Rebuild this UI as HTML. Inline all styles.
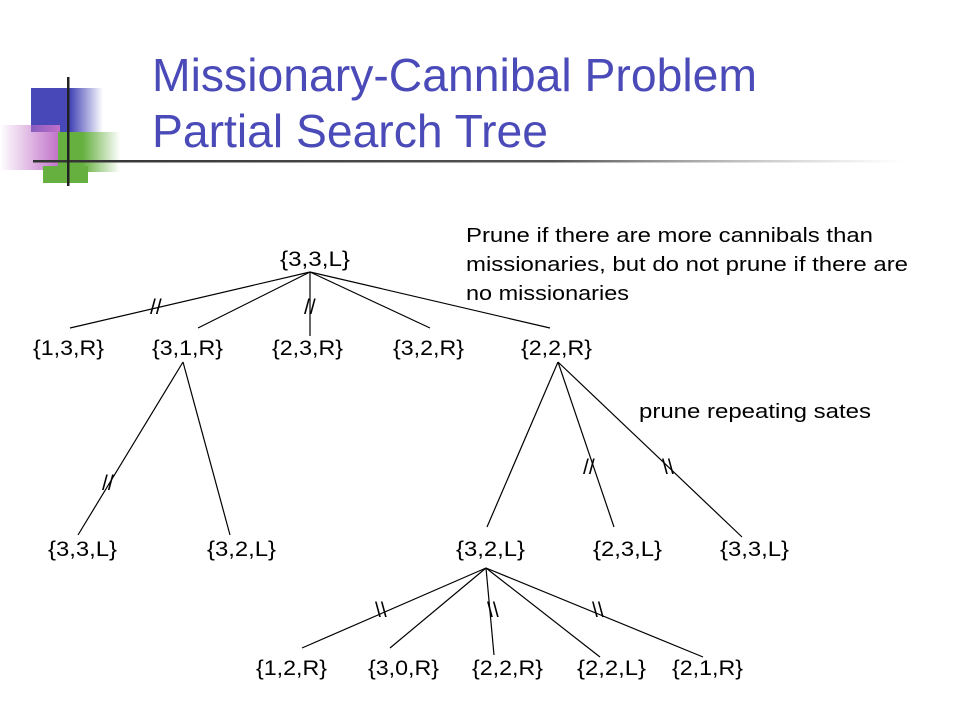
<!DOCTYPE html>
<html><head><meta charset="utf-8"><style>
html,body{margin:0;padding:0;background:#fff;}
svg{display:block}
text{font-family:"Liberation Sans",Arial,sans-serif;}
</style></head><body>
<svg width="960" height="720" viewBox="0 0 960 720" xmlns="http://www.w3.org/2000/svg">
<defs>
<linearGradient id="gb" x1="0" x2="1"><stop offset="0.55" stop-color="#4848b8"/><stop offset="1" stop-color="#4848b8" stop-opacity="0"/></linearGradient>
<linearGradient id="gp" x1="0" x2="1"><stop offset="0" stop-color="#c070c8" stop-opacity="0"/><stop offset="1" stop-color="#c070c8"/></linearGradient>
<linearGradient id="gg" x1="0" x2="1"><stop offset="0.4" stop-color="#66b040"/><stop offset="1" stop-color="#66b040" stop-opacity="0"/></linearGradient>
<linearGradient id="gl" x1="0" x2="1"><stop offset="0" stop-color="#333"/><stop offset="0.6" stop-color="#555"/><stop offset="1" stop-color="#999" stop-opacity="0"/></linearGradient>
</defs>
<rect x="31" y="88" width="72" height="44" fill="url(#gb)"/>
<rect x="0" y="125" width="60" height="45" fill="url(#gp)"/>
<rect x="58" y="132" width="62" height="40" fill="url(#gg)"/>
<rect x="43" y="166" width="45" height="17" fill="#66b040"/>
<rect x="33" y="160" width="870" height="2.5" fill="url(#gl)"/>
<rect x="67" y="77" width="2.5" height="109" fill="#222"/>
<text x="152" y="91" font-size="46" fill="#4a4ab8" textLength="605" lengthAdjust="spacingAndGlyphs">Missionary-Cannibal Problem</text>
<text x="152" y="147" font-size="46" fill="#4a4ab8" textLength="396" lengthAdjust="spacingAndGlyphs">Partial Search Tree</text>

<g font-size="20" fill="#000">
<text x="466" y="242" textLength="407" lengthAdjust="spacingAndGlyphs">Prune if there are more cannibals than</text>
<text x="466" y="271" textLength="442" lengthAdjust="spacingAndGlyphs">missionaries, but do not prune if there are</text>
<text x="466" y="300" textLength="163" lengthAdjust="spacingAndGlyphs">no missionaries</text>
<text x="639" y="418" textLength="232" lengthAdjust="spacingAndGlyphs">prune repeating sates</text>
</g>

<g stroke="#000" stroke-width="1.2" fill="none">
<line x1="310" y1="272" x2="70" y2="328"/>
<line x1="310" y1="272" x2="198" y2="328"/>
<line x1="310" y1="272" x2="310" y2="336"/>
<line x1="310" y1="272" x2="430" y2="328"/>
<line x1="310" y1="272" x2="550" y2="328"/>
<line x1="183" y1="362" x2="78" y2="535"/>
<line x1="183" y1="362" x2="230" y2="535"/>
<line x1="558" y1="362" x2="487" y2="527"/>
<line x1="558" y1="362" x2="614" y2="527"/>
<line x1="558" y1="362" x2="742" y2="537"/>
<line x1="486" y1="568" x2="302" y2="648"/>
<line x1="486" y1="568" x2="390" y2="648"/>
<line x1="486" y1="568" x2="494" y2="655"/>
<line x1="486" y1="568" x2="600" y2="657"/>
<line x1="486" y1="568" x2="703" y2="657"/>
</g>

<g font-size="21" fill="#000">
<text x="150" y="314">//</text>
<text x="304" y="314">//</text>
<text x="102" y="490">//</text>
<text x="583" y="474">//</text>
<text x="662" y="474">\\</text>
<text x="375" y="617">\\</text>
<text x="487" y="617">\\</text>
<text x="592" y="617">\\</text>
</g>

<g font-size="21" fill="#000" lengthAdjust="spacingAndGlyphs">
<text x="280" y="266" textLength="70" lengthAdjust="spacingAndGlyphs">{3,3,L}</text>
<text x="33" y="355" textLength="71" lengthAdjust="spacingAndGlyphs">{1,3,R}</text>
<text x="152" y="355" textLength="71" lengthAdjust="spacingAndGlyphs">{3,1,R}</text>
<text x="272" y="355" textLength="71" lengthAdjust="spacingAndGlyphs">{2,3,R}</text>
<text x="393" y="355" textLength="71" lengthAdjust="spacingAndGlyphs">{3,2,R}</text>
<text x="521" y="355" textLength="71" lengthAdjust="spacingAndGlyphs">{2,2,R}</text>
<text x="48" y="556" textLength="69" lengthAdjust="spacingAndGlyphs">{3,3,L}</text>
<text x="207" y="556" textLength="69" lengthAdjust="spacingAndGlyphs">{3,2,L}</text>
<text x="456" y="556" textLength="69" lengthAdjust="spacingAndGlyphs">{3,2,L}</text>
<text x="593" y="556" textLength="69" lengthAdjust="spacingAndGlyphs">{2,3,L}</text>
<text x="720" y="556" textLength="69" lengthAdjust="spacingAndGlyphs">{3,3,L}</text>
<text x="256" y="675" textLength="71" lengthAdjust="spacingAndGlyphs">{1,2,R}</text>
<text x="368" y="675" textLength="71" lengthAdjust="spacingAndGlyphs">{3,0,R}</text>
<text x="472" y="675" textLength="71" lengthAdjust="spacingAndGlyphs">{2,2,R}</text>
<text x="577" y="675" textLength="69" lengthAdjust="spacingAndGlyphs">{2,2,L}</text>
<text x="672" y="675" textLength="71" lengthAdjust="spacingAndGlyphs">{2,1,R}</text>
</g>
</svg>
</body></html>
